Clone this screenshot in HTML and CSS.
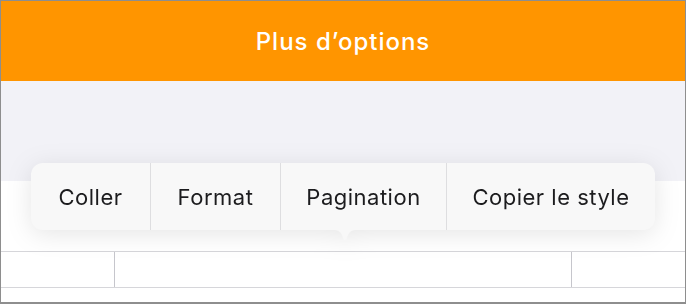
FILE: index.html
```html
<!DOCTYPE html>
<html lang="fr">
<head>
    <meta charset="UTF-8">
    <title>Plus d'options</title>
    <link rel="stylesheet" href="styles.css">
</head>
<body>
    <div class="frame">
        <header class="title-bar">Plus d’options</header>

        <div class="toolbar"></div>

        <div class="sheet">
            <div class="sheet-row">
                <div class="cell cell-first"></div>
                <div class="cell cell-mid"></div>
                <div class="cell cell-last"></div>
            </div>
        </div>

        <!-- Edit menu popup -->
        <div class="edit-menu">
            <div class="menu-items">
                <span class="menu-item">Coller</span>
                <span class="menu-item">Format</span>
                <span class="menu-item">Pagination</span>
                <span class="menu-item">Copier le style</span>
            </div>
            <svg class="menu-arrow" width="24" height="12" viewBox="0 0 24 12">
                <path d="M0 0 C6 0 8 1.5 10.5 8.5 Q12 11.5 13.5 8.5 C16 1.5 18 0 24 0 Z" fill="#f8f8f8"/>
            </svg>
        </div>
    </div>
</body>
</html>
```

FILE: styles.css
```css
body {
    margin: 0;
    font-family: Inter, "Noto Sans", sans-serif;
    background: #ffffff;
}

.frame {
    position: relative;
    width: 686px;
    height: 304px;
    box-sizing: border-box;
    border: 1px solid #8e8e8e;
    border-bottom-width: 2px;
    background: #ffffff;
    overflow: hidden;
}

.title-bar {
    height: 80px;
    background-color: #ff9500;
    color: #ffffff;
    font-size: 24px;
    font-weight: 500;
    letter-spacing: 1px;
    display: flex;
    align-items: center;
    justify-content: center;
}

.toolbar {
    height: 100px;
    background-color: #f2f2f7;
}

.sheet {
    padding-top: 70px;
}

.sheet-row {
    display: flex;
    height: 35px;
    border-top: 1px solid #d6d6da;
    border-bottom: 1px solid #d6d6da;
}

.cell-first {
    width: 113px;
    border-right: 1px solid #c6c6cc;
}

.cell-mid {
    width: 456px;
    border-right: 1px solid #c6c6cc;
}

.cell-last {
    flex: 1;
}

/* popup menu */
.edit-menu {
    position: absolute;
    left: 30px;
    top: 162px;
    filter: drop-shadow(0 4px 12px rgba(0, 0, 0, 0.10));
}

.menu-items {
    display: flex;
    height: 67px;
    background-color: #f8f8f8;
    border-radius: 12px;
}

.menu-item {
    display: flex;
    align-items: center;
    justify-content: center;
    box-sizing: border-box;
    font-size: 22px;
    letter-spacing: 0.5px;
    color: #1c1c1e;
    border-left: 1px solid #dedee0;
}

.menu-item:first-child {
    border-left: none;
    width: 119px;
}

.menu-item:nth-child(2) {
    width: 130px;
}

.menu-item:nth-child(3) {
    width: 166px;
}

.menu-item:nth-child(4) {
    width: 209px;
}

.menu-arrow {
    position: absolute;
    left: 302px;
    top: 67px;
    display: block;
}
```
